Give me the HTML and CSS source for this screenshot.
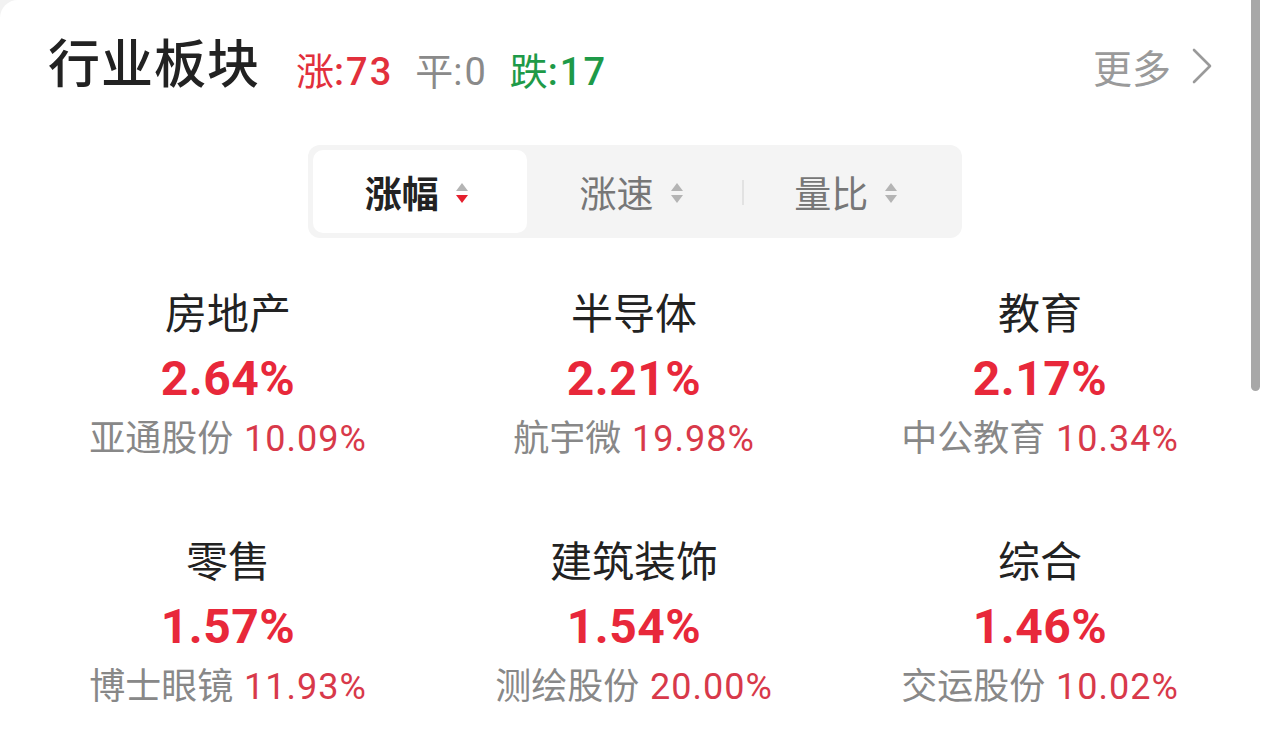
FILE: index.html
```html
<!DOCTYPE html>
<html lang="zh-CN">
<head>
    <meta charset="UTF-8">
    <meta name="viewport" content="width=device-width, initial-scale=1.0">
    <title>行业板块</title>
    <link rel="stylesheet" href="styles.css">
</head>
<body>

<div class="card">
    <!-- Title row with up / flat / down counts -->
    <div class="card-header">
        <h1 class="title">行业板块</h1>
        <div class="stats">
            <span class="stat up">涨<b>:73</b></span>
            <span class="stat flat">平<i>:0</i></span>
            <span class="stat down">跌<b>:17</b></span>
        </div>
        <a href="#" class="more">更多
            <svg class="chevron" width="22" height="36" viewBox="0 0 22 36">
                <polyline points="3,2 19,18 3,34" fill="none" stroke="#9a9a9a" stroke-width="2.6" stroke-linecap="round" stroke-linejoin="round"/>
            </svg>
        </a>
    </div>

    <!-- Sort tabs -->
    <div class="tabs-wrap">
        <div class="tabs">
            <div class="tab active">涨幅
                <svg class="sort" width="14" height="22" viewBox="0 0 14 22">
                    <polygon points="7,1 13,9 1,9" fill="#b4b4b4"/>
                    <polygon points="1,13 13,13 7,21" fill="#e5202e"/>
                </svg>
            </div>
            <div class="tab">涨速
                <svg class="sort" width="14" height="22" viewBox="0 0 14 22">
                    <polygon points="7,1 13,9 1,9" fill="#b4b4b4"/>
                    <polygon points="1,13 13,13 7,21" fill="#b4b4b4"/>
                </svg>
            </div>
            <div class="tab divided">量比
                <svg class="sort" width="14" height="22" viewBox="0 0 14 22">
                    <polygon points="7,1 13,9 1,9" fill="#b4b4b4"/>
                    <polygon points="1,13 13,13 7,21" fill="#b4b4b4"/>
                </svg>
            </div>
        </div>
    </div>

    <!-- Sector grid -->
    <div class="grid">
        <div class="cell">
            <div class="name">房地产</div>
            <div class="pct">2.64%</div>
            <div class="lead">亚通股份 <span>10.09%</span></div>
        </div>
        <div class="cell">
            <div class="name">半导体</div>
            <div class="pct">2.21%</div>
            <div class="lead">航宇微 <span>19.98%</span></div>
        </div>
        <div class="cell">
            <div class="name">教育</div>
            <div class="pct">2.17%</div>
            <div class="lead">中公教育 <span>10.34%</span></div>
        </div>
        <div class="cell">
            <div class="name">零售</div>
            <div class="pct">1.57%</div>
            <div class="lead">博士眼镜 <span>11.93%</span></div>
        </div>
        <div class="cell">
            <div class="name">建筑装饰</div>
            <div class="pct">1.54%</div>
            <div class="lead">测绘股份 <span>20.00%</span></div>
        </div>
        <div class="cell">
            <div class="name">综合</div>
            <div class="pct">1.46%</div>
            <div class="lead">交运股份 <span>10.02%</span></div>
        </div>
    </div>
</div>

<!-- Overlay scrollbar thumb -->
<div class="scroll-thumb"></div>

</body>
</html>
```

FILE: styles.css
```css
/* Styles for the sector panel */
body {
    margin: 0;
    padding: 0;
    background: #f2f2f2;
    font-family: Roboto, "Noto Sans CJK SC", sans-serif;
    color: #222;
    overflow: hidden;
}
.card {
    background: #ffffff;
    border-radius: 18px 0 0 0;
    height: 748px;
    box-sizing: border-box;
    padding: 30px 0 0 0;
}
.card-header {
    display: flex;
    align-items: center;
    height: 72px;
    padding: 0 56px 0 48px;
}
.title {
    margin: 0;
    font-size: 52px;
    font-weight: 500;
    color: #222;
    letter-spacing: 1px;
    line-height: 72px;
}
.stats {
    display: flex;
    align-items: center;
    gap: 22px;
    margin-left: 36px;
    padding-top: 4px;
    font-size: 38px;
}
.stat b,
.stat i {
    font-style: normal;
    letter-spacing: 2px;
}
.stat b {
    font-weight: 500;
}
.up {
    color: #e2303c;
}
.flat {
    color: #8a8a8a;
}
.down {
    color: #1e9a48;
}
.more {
    margin-left: auto;
    display: flex;
    align-items: center;
    gap: 20px;
    font-size: 39px;
    color: #9a9a9a;
    text-decoration: none;
}
.tabs-wrap {
    display: flex;
    justify-content: center;
    margin-top: 43px;
}
.tabs {
    display: flex;
    width: 654px;
    height: 93px;
    box-sizing: border-box;
    padding: 5px;
    background: #f4f4f4;
    border-radius: 12px;
}
.tab {
    flex: 1;
    display: flex;
    align-items: center;
    justify-content: center;
    gap: 16px;
    font-size: 37px;
    color: #777;
    position: relative;
    padding-right: 6px;
}
.tab.active {
    background: #ffffff;
    border-radius: 10px;
    color: #222;
    font-weight: 700;
}
.tab.divided::before {
    content: "";
    position: absolute;
    left: 0;
    top: 30px;
    width: 2px;
    height: 25px;
    background: #e2e2e2;
}
.sort {
    margin-top: 2px;
}
.grid {
    display: grid;
    grid-template-columns: repeat(3, 406px);
    justify-content: start;
    row-gap: 68px;
    margin-top: 47px;
    padding-left: 25px;
}
.cell {
    display: flex;
    flex-direction: column;
    align-items: center;
}
.name {
    font-size: 42px;
    line-height: 60px;
    color: #222;
}
.pct {
    font-size: 48px;
    line-height: 68px;
    font-weight: 700;
    color: #e8283a;
    letter-spacing: 0.5px;
}
.lead {
    font-size: 36px;
    line-height: 52px;
    color: #888;
    white-space: nowrap;
}
.lead span {
    color: #d8394a;
    margin-left: 2px;
    letter-spacing: 1px;
}
.scroll-thumb {
    position: absolute;
    top: 0;
    left: 1251px;
    width: 9px;
    height: 391px;
    background: #a8a8a8;
    border-radius: 0 0 5px 5px;
}
```
